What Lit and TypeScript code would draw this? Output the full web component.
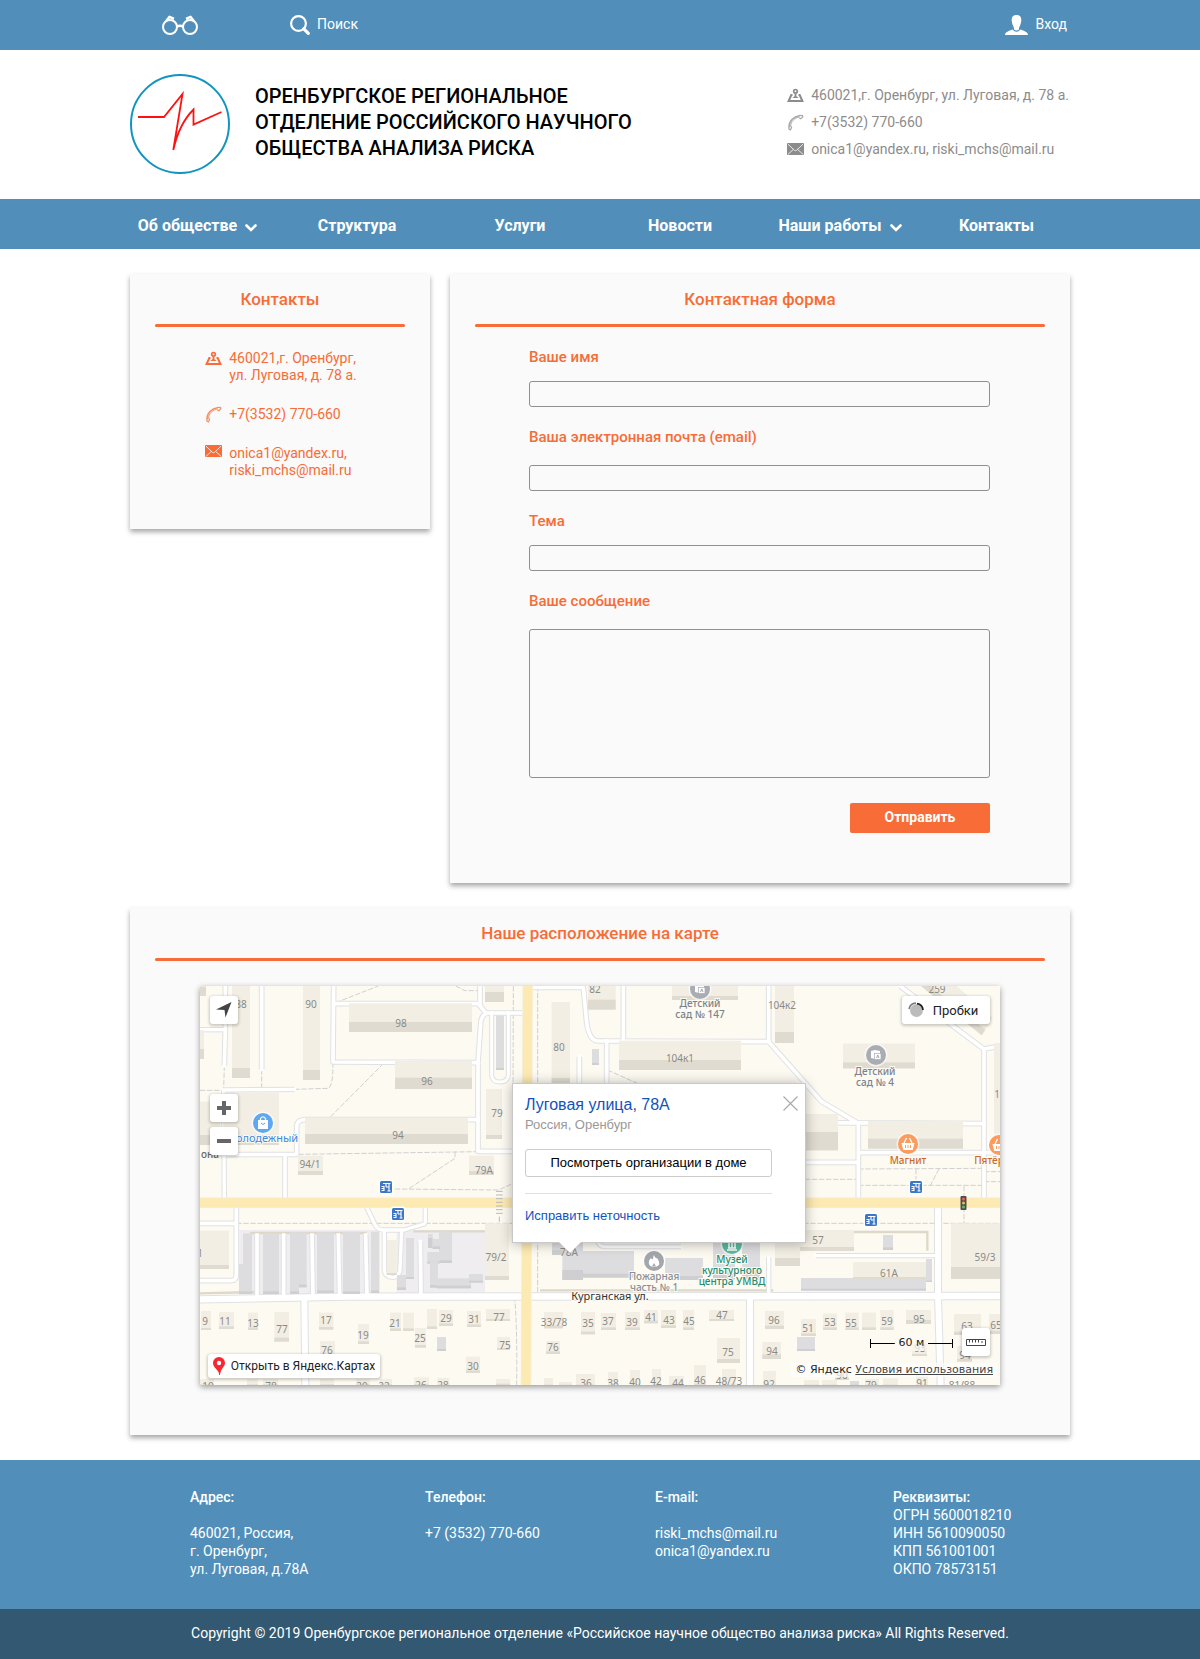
import { LitElement, html, svg, css } from "lit";
import { customElement, property } from "lit/decorators.js";

/* ---------- icons ---------- */

const pinIcon = html`<svg class="icon" width="17" height="17" viewBox="0 0 17 17" aria-hidden="true">
  <g fill="none" stroke="currentColor">
    <path d="M5.500 8H4.300L1.600 14.100h13.800L12.700 8h-1.200" stroke-width="2" />
    <circle cx="8.500" cy="4.300" r="1.800" stroke-width="1.700" />
    <path d="M8.500 6v3.500" stroke-width="1.800" />
    <path d="M5.300 11L8.500 8.600L11.700 11z" fill="currentColor" stroke="none" />
  </g>
</svg>`;

const phoneIcon = html`<svg class="icon" width="17" height="17" viewBox="0 0 17 18" aria-hidden="true">
  <g fill="none" stroke="currentColor" opacity=".75" stroke-linecap="round">
    <path d="M1.700 13.500C1.400 8 6.500 2.600 12.800 1.800" stroke-width="1.600" />
    <path d="M3.300 12C3.600 8.500 7.300 4.400 11.600 3.300" stroke-width="1" />
    <path d="M1.600 13.500v2.600l1.500.7 1.200-2.500-.9-1.800M12.700 1.500l3.300.2.200 1.300-2 2-1.800-1" stroke-width="1.300" />
  </g>
</svg>`;

const mailIcon = html`<svg class="icon" width="17" height="14" viewBox="0 0 17 14" aria-hidden="true">
  <rect x="0" y="0" width="17" height="12" rx="1" fill="currentColor" />
  <path d="M1 1.200l6.300 6q1.200 1 2.400 0L16 1.200M1 11.300l5.500-5M16 11.300l-5.500-5" fill="none" stroke="#fff" stroke-opacity=".8" stroke-width="1" />
</svg>`;

const chevron = html`<svg width="12" height="8" viewBox="0 0 12 8" aria-hidden="true">
  <path d="M1.500 1.500L6 6l4.500-4.500" fill="none" stroke="currentColor" stroke-width="2.600" stroke-linecap="round" />
</svg>`;

/* ---------- map data, in thirds of a pixel ---------- */

type Block = [number, number, number, number, number];
type Label = [number, number, string];
interface Sector {
  dx: number;
  dy: number;
  blocks: Block[];
  grey: Block[];
  labels: Label[];
}

const roads: [string, number][] = [
  ["M76 0V130L73 239", 11],
  ["M0 131H72", 10],
  ["M185 0V250", 11],
  ["M401 0L399 228L835 230", 11],
  ["M401 53H835L858 82M840 0V55", 11],
  ["M858 82Q842 90 842 115L834 230V496H968", 11],
  ["M858 81H970", 11],
  ["M875 80V268Q877 288 898 288Q923 288 925 268V80", 9],
  ["M70 312L283 310M71 312L73 637", 10],
  ["M70 506L290 505V419Q292 402 315 401H835M255 507V637", 11],
  ["M109 664V866Q109 884 91 884H0M0 712H109", 11],
  ["M500 664L524 714Q532 732 550 732H612L672 714Q676 712 676 700V664", 10],
  ["M553 734V850Q553 872 578 874Q598 872 600 850L605 734", 10],
  ["M0 940L450 932L2400 930", 19],
  ["M313 940L316 1197", 18],
  ["M171 747V934M251 747V934M336 747L339 934M415 747L419 934M497 747L501 934M661 767L663 930", 11],
  ["M998 4H1150L1160 110Q1168 165 1195 165L1706 167", 11],
  ["M1270 0V165M1220 165V320M1138 212V320", 11],
  ["M1706 0V167L1865 347L1975 412M1815 410L2352 413", 11],
  ["M1975 412V637M1975 500H2400M1815 529H1975", 11],
  ["M2100 0L2352 190V637M2352 189L2400 180", 11],
  ["M2214 662V930L2222 1197", 18],
  ["M1650 930V1197", 18],
  ["M1848 809H2214M1706 814V918", 10],
  ["M1190 760Q1195 782 1215 782H1443", 9],
];

const paths =
  "M407 50L535 0M767 0L795 14H840M73 239L71 312M185 250V312M0 313H70M283 310L385 307Q399 300 399 232" +
  "M551 232L390 394M295 505L835 497M765 497V517L625 609M585 609L895 612L940 592M109 712H2400" +
  "M940 0L938 720M1013 0V930M1222 252L1312 292M943 932Q952 1000 950 1197M1975 549L2350 547" +
  "M2148 549V590M2217 549L2190 600M1815 580H1975M1975 598H2350M2352 557H2400M2352 587H2400M2292 600V712";

const sectors: Sector[] = [
  {
    dx: -30, dy: -18,
    blocks: [
      [30, 17, 18, 31, 28], [30, 150, 12, 87, 30], [126, 17, 54, 277, 30], [339, 17, 51, 283, 30],
      [477, 70, 369, 86, 30], [615, 243, 231, 84, 34], [345, 414, 489, 78, 30], [888, 327, 48, 150, 12],
      [100, 338, 167, 157, 30], [30, 365, 60, 130, 30], [324, 527, 75, 58, 12], [837, 527, 75, 58, 12],
      [885, 17, 57, 49, 30],
    ],
    grey: [[918, 106, 24, 164, 6]],
    labels: [
      [152, 83, "88"], [362, 83, "90"], [632, 140, "98"], [710, 314, "96"], [624, 476, "94"],
      [920, 410, "79"], [359, 563, "94/1"], [881, 581, "79А"],
    ],
  },
  {
    dx: -30, dy: 582,
    blocks: [
      [30, 152, 87, 115, 12], [885, 130, 72, 170, 12], [590, 180, 30, 105, 6], [33, 393, 30, 57, 6],
      [87, 396, 45, 51, 8], [174, 398, 30, 52, 8], [253, 396, 44, 89, 12], [387, 398, 43, 51, 8],
      [504, 432, 33, 60, 8], [390, 483, 45, 60, 8], [600, 398, 33, 55, 8], [639, 398, 33, 55, 8],
      [675, 444, 33, 59, 8], [711, 387, 30, 60, 8], [747, 390, 42, 48, 8], [831, 393, 42, 48, 8],
      [888, 387, 72, 36, 6], [921, 471, 39, 39, 6], [828, 530, 42, 49, 8], [918, 597, 42, 20, 6],
      [30, 597, 42, 20, 4], [171, 597, 33, 20, 4], [219, 597, 45, 20, 4], [390, 597, 42, 20, 4],
      [498, 597, 42, 20, 4], [570, 597, 36, 20, 4], [672, 592, 45, 25, 4], [742, 594, 36, 23, 4],
    ],
    grey: [
      [159, 160, 27, 182, 8], [147, 252, 28, 90, 8], [219, 160, 48, 182, 8], [300, 157, 50, 165, 8],
      [300, 310, 27, 32, 8], [381, 157, 51, 182, 8], [459, 155, 51, 187, 8], [543, 155, 24, 184, 8],
      [648, 174, 24, 123, 6], [621, 285, 27, 45, 8], [747, 154, 39, 95, 8], [712, 216, 36, 35, 6],
      [720, 245, 24, 78, 8], [740, 295, 103, 30, 8], [837, 282, 42, 26, 6], [741, 471, 27, 42, 6],
      [714, 162, 14, 42, 30], [728, 177, 22, 30, 8],
    ],
    labels: [
      [30, 230, "1"], [918, 242, "79/2"], [45, 434, "9"], [106, 434, "11"], [188, 440, "13"],
      [275, 458, "77"], [407, 431, "17"], [519, 476, "19"], [411, 523, "76"], [616, 440, "21"],
      [690, 485, "25"], [768, 427, "29"], [853, 428, "31"], [927, 422, "77"], [944, 506, "75"],
      [849, 569, "30"], [54, 629, "10"], [242, 629, "78"], [516, 629, "20"], [582, 629, "22"],
      [693, 627, "26"], [759, 627, "28"],
    ],
  },
  {
    dx: 900, dy: -18,
    blocks: [
      [264, 17, 83, 72, 30], [155, 66, 55, 258, 30], [516, 17, 198, 43, 12], [357, 182, 366, 88, 30],
    ],
    grey: [[276, 207, 21, 48, 6]],
    labels: [[285, 38, "82"], [177, 212, "80"], [541, 245, "104к1"]],
  },
  {
    dx: 1620, dy: -18,
    blocks: [
      [105, 17, 57, 172, 33], [309, 191, 216, 74, 18], [180, 402, 114, 109, 55], [384, 423, 285, 83, 30],
      [762, 190, 20, 300, 6],
    ],
    grey: [],
    labels: [[126, 86, "104к2"], [591, 38, "259"], [771, 355, "1"]],
  },
  {
    dx: 900, dy: 642,
    blocks: [
      [132, 336, 57, 49, 8], [243, 336, 42, 67, 8], [303, 339, 45, 51, 8], [375, 336, 45, 54, 8],
      [432, 330, 42, 40, 8], [483, 330, 45, 54, 8], [549, 330, 33, 60, 8], [627, 330, 75, 33, 6],
      [138, 423, 42, 39, 8], [651, 414, 69, 75, 12], [582, 495, 36, 60, 4], [132, 534, 27, 21, 1],
      [177, 546, 39, 9, 1], [228, 522, 57, 33, 1], [324, 516, 30, 39, 1], [390, 510, 30, 45, 1],
      [456, 507, 27, 48, 1], [507, 528, 45, 27, 1], [666, 507, 42, 48, 1],
    ],
    grey: [[156, 110, 93, 55, 14], [249, 153, 153, 80, 12], [187, 140, 62, 100, 30], [495, 174, 114, 66, 12], [639, 100, 66, 138, 30], [726, 100, 54, 138, 30]],
    labels: [
      [207, 169, "78А"], [162, 377, "33/78"], [264, 382, "35"], [323, 376, "37"], [396, 377, "39"],
      [453, 362, "41"], [507, 371, "43"], [567, 374, "45"], [666, 358, "47"], [159, 454, "76"],
      [684, 469, "75"], [258, 562, "36"], [339, 560, "38"], [405, 559, "40"], [468, 556, "42"],
      [534, 562, "44"], [600, 551, "46"], [687, 556, "48/73"],
    ],
  },
  {
    dx: 1620, dy: 582,
    blocks: [
      [105, 190, 75, 68, 24], [180, 150, 162, 63, 12], [339, 246, 219, 51, 6], [633, 130, 147, 167, 36],
      [75, 393, 57, 54, 10], [183, 417, 45, 51, 8], [249, 401, 42, 49, 8], [316, 398, 40, 52, 8],
      [366, 398, 42, 52, 8], [421, 390, 40, 60, 8], [498, 390, 75, 42, 12], [642, 402, 81, 63, 10],
      [747, 402, 33, 60, 10], [67, 486, 56, 51, 14], [516, 490, 45, 38, 6], [651, 498, 45, 47, 8],
      [285, 570, 42, 30, 6], [69, 573, 39, 42, 1], [528, 580, 36, 35, 1], [192, 600, 45, 15, 1],
      [246, 600, 45, 15, 1], [375, 597, 42, 18, 1], [429, 595, 45, 20, 1],
    ],
    grey: [[429, 165, 30, 45, 8], [558, 237, 18, 69, 4], [183, 294, 375, 38, 6], [171, 471, 54, 42, 6], [330, 603, 27, 12, 1]],
    labels: [
      [233, 191, "57"], [446, 290, "61А"], [735, 242, "59/3"], [102, 431, "96"], [205, 457, "51"],
      [269, 437, "53"], [332, 440, "55"], [440, 434, "59"], [537, 428, "95"], [681, 449, "63"],
      [768, 447, "65"], [96, 526, "94"], [540, 515, "93"], [675, 536, "94"], [87, 623, "92"],
      [547, 620, "91"], [305, 596, "90"], [393, 626, "79"], [666, 627, "81/88"],
    ],
  },
];

const busStops: [number, number][] = [[186, 201], [198, 228], [716, 201], [671, 234]];

/* ---------- map ---------- */

@customElement("city-map")
export class CityMap extends LitElement {
  static styles = css`
    :host { display: block; font-family: "Liberation Sans", Arial, sans-serif; color: #000; }
    .map { position: relative; height: 399px; overflow: hidden; background: #fdfaf2; }
    .canvas { display: block; width: 100%; height: 100%; }
    .num { font: 10px "Noto Sans", sans-serif; fill: #8a8a88; text-anchor: middle; }
    .place { font: 500 10px "Noto Sans", sans-serif; text-anchor: middle; paint-order: stroke; stroke: #fdfaf2; stroke-width: 2px; }
    .street { font: 11px "Noto Sans", sans-serif; }
    .ctl {
      position: absolute; box-sizing: border-box; display: flex; align-items: center; justify-content: center;
      border: 0; border-radius: 3px; background: #fff; box-shadow: 0 1px 3px 1px rgba(0, 0, 0, .2);
      padding: 0; color: #222; text-decoration: none; white-space: nowrap;
    }
    .square { width: 28px; height: 28px; }
    .locate { left: 10px; top: 10px; }
    .plus { left: 10px; top: 108px; }
    .minus { left: 10px; top: 141px; }
    .ruler { right: 10px; bottom: 29px; }
    .traffic { right: 10px; top: 10px; height: 28px; width: 88px; padding-right: 6px; gap: 9px; font: 13px Roboto, sans-serif; }
    .open { left: 8px; bottom: 7px; height: 24px; width: 172px; gap: 6px; font: 12px Roboto, sans-serif; }
    .scale { position: absolute; right: 47px; bottom: 34px; width: 83px; display: flex; align-items: center; font: 11px/16px "DejaVu Sans", sans-serif; color: #222; }
    .bar { flex: 1; height: 9px; background: linear-gradient(#000, #000) center / 100% 1px no-repeat; box-sizing: border-box; }
    .bar-left { border-left: 1px solid #000; }
    .bar-right { border-right: 1px solid #000; }
    .scale-text { padding: 0 4px; background: rgba(253, 250, 242, .7); }
    .legal { position: absolute; right: 3px; bottom: 8px; padding: 0 4px; background: rgba(255, 255, 255, .6); font: 11px/14px "DejaVu Sans", sans-serif; color: #222; }
    .legal a { color: #444; }
    .balloon {
      position: absolute; left: calc(50% - 88px); top: 97px; width: 294px; height: 160px; box-sizing: border-box;
      padding: 11px 33px 0 12px; background: #fff; border: 1px solid #c8c8c8; box-shadow: 0 1px 12px rgba(0, 0, 0, .3);
    }
    .tail { position: absolute; left: 46px; top: 158px; }
    .close { position: absolute; right: 7px; top: 12px; width: 15px; height: 15px; padding: 0; border: 0; background: none; }
    .close svg { display: block; }
    .title { margin: 0; font-size: 16px; line-height: 20px; font-weight: 400; color: #1252bf; white-space: nowrap; }
    .sub { margin: 0 0 14px; font-size: 13px; line-height: 20px; color: #999; }
    .orgs { display: block; width: 100%; height: 28px; padding: 0 0 2px; border: 1px solid #ccc; border-radius: 3px; background: #fff; font: 13px "Liberation Sans", Arial, sans-serif; color: #000; }
    .line { height: 1px; margin: 16px 0 13px; background: #e0e0e0; }
    .fix { font-size: 13px; line-height: 16px; color: #1252bf; text-decoration: none; }
  `;

  private pictogram(x: number, y: number, color: string, glyph: unknown) {
    return svg`<g transform="translate(${x} ${y})"><circle r="11.500" fill="#fff" opacity=".6" /><circle r="10" fill=${color} />${glyph}</g>`;
  }

  private place(x: number, y: number, color: string, lines: string[], kind = "") {
    return lines.map((t, i) => svg`<text class="place ${kind}" x=${x} y=${y + i * 11} fill=${color}>${t}</text>`);
  }

  render() {
    const basket = svg`<path d="M-6.500-1h13l-1.800 7h-9.400z" fill="#fff" /><path d="M-4-1L-1.500-6M4-1L1.500-6" fill="none" stroke="#fff" stroke-width="1.300" /><path d="M-2.500 1v3M0 1v3M2.500 1v3" stroke="#fc9b5e" />`;
    const school = svg`<path d="M-5-4l4-1 5 1v3H-1v5l-4-1z" fill="#fff" /><rect x="-1.500" y="-1.500" width="6.500" height="6" fill="#fff" stroke="#a9adb3" stroke-width=".7" /><path d="M.5 3L1.800 0L3 3" fill="none" stroke="#8b8f96" stroke-width=".8" />`;
    return html`<div class="map">
      <svg class="canvas" viewBox="0 0 800 399" preserveAspectRatio="xMidYMid slice" role="img" aria-label="Карта">
        <g transform="scale(.333333)">
          <rect width="2400" height="1197" fill="#fdfaf2" />
          <path d="M118 732H540V925H118zM590 732H855V922H590z" fill="#efedf0" />
          <path d="M150 741H500M640 736H855M1962 738H2182V794M1020 913H1720M0 922L170 918" fill="none" stroke="#ddd8ca" stroke-width="7" />
          <path d="M1020 724H1500V909H1028z" fill="#fdfaf2" />
          <path d="M2163 0L2345 148L2378 96L2270 0z" fill="#f2eee3" />
          <path d="M2163 0L2345 148L2356 131L2190 0z" fill="#dfdbd0" />
          <path d=${paths} fill="none" stroke="#cfd0cf" stroke-width="3" stroke-dasharray="16 5" />
          <g fill="none" stroke="#e0e1e3" stroke-linejoin="round">${roads.map(([d, w]) => svg`<path d=${d} stroke-width=${w + 6} />`)}</g>
          <g fill="none" stroke="#fff" stroke-linejoin="round" stroke-linecap="square">${roads.map(([d, w]) => svg`<path d=${d} stroke-width=${w} />`)}</g>
          <path d="M0 650H2400M983 0L978 1197" fill="none" stroke="#f5efdc" stroke-width="32" />
          <path d="M0 650H2400M983 0L978 1197" fill="none" stroke="#fdeab3" stroke-width="27" />
          <path d="M888 616h20m-20 11h20m-20 11h20m-20 11h20m-20 11h20m-20 11h20m-20 11h20M898 692v15" stroke="#b7b9b8" stroke-width="3" />
          ${sectors.map((s) => svg`<g transform="translate(${s.dx} ${s.dy})">
            ${s.grey.map(([x, y, w, h, k]) => svg`<rect x=${x} y=${y} width=${w} height=${h} fill="#dddde0" /><rect x=${x} y=${y + h - k} width=${w} height=${k} fill="#cfced1" />`)}
            ${s.blocks.map(([x, y, w, h, k]) => svg`<rect x=${x} y=${y} width=${w} height=${h} fill="#f2eee3" /><rect x=${x} y=${y + h - k} width=${w} height=${k} fill="#dfdbd0" />`)}
          </g>`)}
        </g>
        ${sectors.map((s) => s.labels.map(([x, y, t]) => svg`<text class="num" x=${Math.round((x + s.dx) / 3)} y=${Math.round((y + s.dy) / 3)}>${t}</text>`))}
        ${busStops.map(([x, y]) => svg`<g transform="translate(${x} ${y})">
          <rect x="-7.500" y="-7.500" width="15" height="15" rx="3" fill="#fff" /><rect x="-6" y="-6" width="12" height="12" rx="1.500" fill="#3d78c6" />
          <path d="M-3-3.500H4.500M0-3.500V0M0 0H3M3-3.500V4M1.500 4H4.500M-4.500-.5H-2V3.500H-4.500M-4.500 1.500H-2" fill="none" stroke="#fff" stroke-width="1.100" />
        </g>`)}
        ${this.pictogram(63, 137, "#5fa7f0", svg`<path d="M-5-3H5V6H-5z" fill="#fff" /><path d="M-2.500-3V-4.500Q0-8 2.500-4.500V-3" fill="none" stroke="#fff" stroke-width="1.200" /><path d="M-2 0Q0 3 2 0" fill="none" stroke="#5fa7f0" />`)}
        ${this.pictogram(500, 3, "#a9adb3", school)}
        ${this.pictogram(676, 69, "#a9adb3", school)}
        ${this.pictogram(708, 158, "#fc9b5e", basket)}
        ${this.pictogram(799, 159, "#fc9b5e", basket)}
        ${this.pictogram(454, 275, "#a3a6ac", svg`<path d="M0-6Q1-2 3-3Q6 1 5 4Q3 6 0 6Q-4 6-5 3Q-6 0-3-3Q-2-1-1-2Q-1-4 0-6z" fill="#fff" /><path d="M0 2L2 5.500H-2z" fill="#a3a6ac" />`)}
        ${this.pictogram(532, 258, "#5dba9f", svg`<path d="M-5 6H5M-4 4H4M-3-1V4M0-1V4M3-1V4M-5-2H5L0-5z" stroke="#fff" stroke-width="1.500" />`)}
        ${this.place(67, 156, "#3d8ae0", ["олодежный"], "street")}
        ${this.place(10, 172, "#666", ["она"])}
        ${this.place(500, 21, "#7b828c", ["Детский", "сад № 147"])}
        ${this.place(675, 89, "#7b828c", ["Детский", "сад № 4"])}
        ${this.place(708, 178, "#cc6a25", ["Магнит"])}
        ${this.place(789, 178, "#cc6a25", ["Пятёр"])}
        ${this.place(454, 294, "#8a8e96", ["Пожарная", "часть № 1"])}
        ${this.place(532, 277, "#268c72", ["Музей", "культурного", "центра УМВД"])}
        ${this.place(410, 314, "#333", ["Курганская ул."], "street")}
        <rect x="760.500" y="210" width="6" height="14" rx="1" fill="#4d4d50" />
        <circle cx="763.500" cy="213" r="1.500" fill="#e8615a" /><circle cx="763.500" cy="217" r="1.500" fill="#e6bf4c" /><circle cx="763.500" cy="221" r="1.500" fill="#5dbb63" />
      </svg>

      <button class="ctl square locate" aria-label="Моё местоположение"><svg width="16" height="16" viewBox="0 0 16 16"><path d="M0 7.500L15.500 0L9.500 15.500L8.500 8z" fill="#444" /></svg></button>
      <button class="ctl square plus" aria-label="Приблизить"><svg width="14" height="14" viewBox="0 0 14 14"><path d="M0 7H14M7 0V14" stroke="#666" stroke-width="4" /></svg></button>
      <button class="ctl square minus" aria-label="Отдалить"><svg width="14" height="14" viewBox="0 0 14 14"><path d="M0 7H14" stroke="#666" stroke-width="4" /></svg></button>
      <button class="ctl traffic"><svg width="16" height="16" viewBox="0 0 16 16" aria-hidden="true"><circle cx="8.500" cy="8.500" r="6.500" fill="#bbb" /><path d="M1 7A7.500 7.500 0 0 1 8 1" fill="none" stroke="#777" stroke-width="1.500" /><path d="M9 1.700A7 7 0 0 1 15 8" fill="none" stroke="#222" stroke-width="1.800" /></svg>Пробки</button>
      <button class="ctl square ruler" aria-label="Линейка"><svg width="20" height="7" viewBox="0 0 20 7"><path d="M.5.5h19v6H.5zM3.500.5v3M6.500.5v3M9.500.5v3M12.500.5v3M16 2v2" fill="none" stroke="#444" /></svg></button>
      <a class="ctl open" href="#"><svg width="12" height="18" viewBox="0 0 12 18" aria-hidden="true"><path d="M6 0a6 6 0 0 1 6 6c0 4-4 4.500-5 12h-.8C6.400 13 0 11 0 6a6 6 0 0 1 6-6z" fill="#f8262f" /><circle cx="6" cy="6" r="2.200" fill="#fff" /></svg>Открыть в Яндекс.Картах</a>
      <div class="scale"><span class="bar bar-left"></span><span class="scale-text">60 м</span><span class="bar bar-right"></span></div>
      <div class="legal">© Яндекс <a href="#">Условия использования</a></div>

      <div class="balloon">
        <svg class="tail" width="22" height="11" viewBox="0 0 22 11" aria-hidden="true"><path d="M0 0H22L11 11z" fill="#fff" /></svg>
        <button class="close" aria-label="Закрыть"><svg width="15" height="15" viewBox="0 0 15 15"><path d="M.5.5l14 14M14.500.5l-14 14" stroke="#aaa" stroke-width="1.200" /></svg></button>
        <h3 class="title">Луговая улица, 78А</h3>
        <p class="sub">Россия, Оренбург</p>
        <button class="orgs">Посмотреть организации в доме</button>
        <div class="line"></div>
        <a class="fix" href="#">Исправить неточность</a>
      </div>
    </div>`;
  }
}

/* ---------- card ---------- */

@customElement("info-card")
export class InfoCard extends LitElement {
  @property() heading = "";

  static styles = css`
    :host { display: block; box-sizing: border-box; padding: 15px 25px 50px; background: #fafafa; box-shadow: 0 3px 5px rgba(0, 0, 0, .35); }
    .heading { margin: 0 0 15px; text-align: center; font-size: 17px; line-height: 20px; font-weight: 500; color: #f76c37; }
    .rule { height: 3px; border-radius: 2px; background: #f76c37; }
  `;

  render() {
    return html`<h2 class="heading">${this.heading}</h2><div class="rule"></div><slot></slot>`;
  }
}

/* ---------- page ---------- */

const menu = [
  { title: "Об обществе", more: true },
  { title: "Структура" },
  { title: "Услуги" },
  { title: "Новости" },
  { title: "Наши работы", more: true },
  { title: "Контакты" },
];

const footer = [
  ["Адрес:", "", "460021, Россия,", "г. Оренбург,", "ул. Луговая, д.78А"],
  ["Телефон:", "", "+7 (3532) 770-660"],
  ["E-mail:", "", "riski_mchs@mail.ru", "onica1@yandex.ru"],
  ["Реквизиты:", "ОГРН 5600018210", "ИНН 5610090050", "КПП 561001001", "ОКПО 78573151"],
];

@customElement("app-root")
export class AppRoot extends LitElement {
  static styles = css`
    :host { display: block; background: #fff; font-family: Roboto, sans-serif; font-size: 14px; color: #000; }
    a { color: inherit; text-decoration: none; }
    .wrap { box-sizing: border-box; width: 100%; max-width: 940px; margin: 0 auto; }
    .blue { background: #518fba; color: #fff; }
    .top { display: flex; align-items: center; height: 50px; padding: 0 3px 0 32px; }
    .tool { display: flex; align-items: center; padding: 0; border: 0; background: none; color: inherit; font: 14px/18px Roboto, sans-serif; }
    .search { margin-left: 92px; gap: 7px; }
    .login { margin-left: auto; gap: 8px; }
    .label { padding-bottom: 2px; }
    .head { display: flex; align-items: flex-start; padding: 24px 0 25px; }
    .logo { flex: none; display: block; }
    .name { margin: 0 0 0 25px; padding-top: 9px; font-size: 20px; line-height: 26px; font-weight: 500; }
    .name-line { display: block; }
    .reach { margin: 0 0 0 auto; padding: 8px 1px 0 0; list-style: none; color: #8c8c8c; line-height: 27px; }
    .reach-row { display: flex; align-items: center; gap: 7px; }
    .menu { display: grid; grid-template-columns: 147fr 160fr 166fr 154fr 166fr 147fr; height: 50px; align-items: center; }
    .menu-item { display: flex; align-items: center; justify-content: center; gap: 8px; padding-top: 3px; font-size: 16px; line-height: 20px; font-weight: 700; white-space: nowrap; }
    .menu-item:first-child { padding-right: 12px; }
    .menu-item svg { margin-top: 4px; }
    .main { display: grid; grid-template-columns: 300fr 620fr; gap: 25px 20px; align-items: start; padding: 25px 0; }
    .wide { grid-column: 1 / -1; }
    .contacts { display: grid; gap: 22px; width: fit-content; margin: 23px auto 0; padding: 0 0 0 2px; list-style: none; color: #f76c37; line-height: 17px; }
    .contact { display: grid; grid-template-columns: 17px auto; gap: 7px; }
    .form { display: flex; flex-direction: column; gap: 20px; margin: 20px 55px 0 54px; }
    .field { display: flex; flex-direction: column; gap: 14px; }
    .loose { gap: 18px; }
    .caption { font-size: 15px; line-height: 20px; font-weight: 500; color: #f76c37; }
    .box { box-sizing: border-box; width: 100%; height: 26px; margin: 0; padding: 2px 8px; border: 1px solid #8f8f8f; border-radius: 3px; background: transparent; font: 14px Roboto, sans-serif; }
    .area { display: block; height: 149px; resize: none; }
    .send { align-self: flex-end; width: 140px; height: 30px; margin-top: 5px; padding: 0 0 2px; border: 0; border-radius: 2px; background: #f76c37; color: #fff; font: 700 14px Roboto, sans-serif; }
    .map { display: block; max-width: 800px; margin: 25px auto 0; box-shadow: 0 2px 6px rgba(0, 0, 0, .4); }
    .foot { display: grid; grid-template-columns: 235fr 230fr 238fr 119fr; padding: 28px 58px 31px 60px; line-height: 18px; white-space: nowrap; }
    .foot-line { min-height: 18px; }
    .foot-line:first-child { font-weight: 500; }
    .copy { background: #335871; color: #fff; text-align: center; padding: 15px 0 17px; line-height: 18px; }
  `;

  render() {
    return html`
      <div class="blue">
        <div class="wrap top">
          <button class="tool" aria-label="Версия для слабовидящих">
            <svg width="36" height="20" viewBox="0 0 36 20"><g fill="none" stroke="#fff" stroke-width="2"><circle cx="8" cy="12" r="7" /><circle cx="28" cy="12" r="7" /><path d="M15 11.500q3-1.500 6 0M4 6.200L7.500 1.800l4.500 2M32 6.200L28.500 1.800l-4.500 2" stroke-width="2.400" stroke-linejoin="round" /></g></svg>
          </button>
          <button class="tool search">
            <svg width="20" height="20" viewBox="0 0 20 20" aria-hidden="true"><circle cx="8.500" cy="8.500" r="7.400" fill="none" stroke="#fff" stroke-width="2.200" /><path d="M13.800 13.800L18.300 18.300" stroke="#fff" stroke-width="3.200" stroke-linecap="round" /></svg>
            <span class="label">Поиск</span>
          </button>
          <a class="tool login" href="#">
            <svg width="23" height="20" viewBox="0 0 23 20" aria-hidden="true"><path d="M11.500 0C15 0 16.500 2 16.300 5.500C16.100 9 14.800 11 14 13V14.500Q11.500 16.500 9 14.500V13C8.200 11 6.900 9 6.700 5.500C6.500 2 8 0 11.500 0z" fill="#fff" /><path d="M0 20C0 17 4 16 7.500 14.500Q11.500 19 15.500 14.500C19 16 23 17 23 20z" fill="#fff" /></svg>
            <span class="label">Вход</span>
          </a>
        </div>
      </div>

      <header class="wrap head">
        <svg class="logo" width="100" height="100" viewBox="0 0 100 100" role="img" aria-label="Логотип">
          <circle cx="50" cy="50" r="49" fill="#fff" stroke="#1294c2" stroke-width="2" />
          <path d="M8 43H34L52.500 20L43.300 76Q49 50 63.500 35.500V50.500L91.500 38" fill="none" stroke="#f11" stroke-width="1.800" stroke-miterlimit="30" />
        </svg>
        <h1 class="name">
          <span class="name-line">ОРЕНБУРГСКОЕ РЕГИОНАЛЬНОЕ</span>
          <span class="name-line">ОТДЕЛЕНИЕ РОССИЙСКОГО НАУЧНОГО</span>
          <span class="name-line">ОБЩЕСТВА АНАЛИЗА РИСКА</span>
        </h1>
        <ul class="reach">
          <li class="reach-row">${pinIcon}<span>460021,г. Оренбург, ул. Луговая, д. 78 а.</span></li>
          <li class="reach-row">${phoneIcon}<span>+7(3532) 770-660</span></li>
          <li class="reach-row">${mailIcon}<span>onica1@yandex.ru, riski_mchs@mail.ru</span></li>
        </ul>
      </header>

      <div class="blue">
        <nav class="wrap menu">
          ${menu.map((m) => html`<a class="menu-item" href="#">${m.title}${m.more ? chevron : ""}</a>`)}
        </nav>
      </div>

      <main class="wrap main">
        <info-card heading="Контакты">
          <ul class="contacts">
            <li class="contact">${pinIcon}<span>460021,г. Оренбург,<br />ул. Луговая, д. 78 а.</span></li>
            <li class="contact">${phoneIcon}<span>+7(3532) 770-660</span></li>
            <li class="contact">${mailIcon}<span>onica1@yandex.ru,<br />riski_mchs@mail.ru</span></li>
          </ul>
        </info-card>

        <info-card heading="Контактная форма">
          <form class="form" @submit=${(e: Event) => e.preventDefault()}>
            <div class="field"><label class="caption" for="name">Ваше имя</label><input class="box" id="name" type="text" /></div>
            <div class="field loose"><label class="caption" for="email">Ваша электронная почта (email)</label><input class="box" id="email" type="email" /></div>
            <div class="field"><label class="caption" for="topic">Тема</label><input class="box" id="topic" type="text" /></div>
            <div class="field loose"><label class="caption" for="message">Ваше сообщение</label><textarea class="box area" id="message"></textarea></div>
            <button class="send" type="submit">Отправить</button>
          </form>
        </info-card>

        <info-card class="wide" heading="Наше расположение на карте">
          <city-map class="map"></city-map>
        </info-card>
      </main>

      <footer>
        <div class="blue">
          <div class="wrap foot">
            ${footer.map((col) => html`<div>${col.map((line) => html`<div class="foot-line">${line}</div>`)}</div>`)}
          </div>
        </div>
        <div class="copy">Copyright © 2019 Оренбургское региональное отделение «Российское научное общество анализа риска» All Rights Reserved.</div>
      </footer>
    `;
  }
}
